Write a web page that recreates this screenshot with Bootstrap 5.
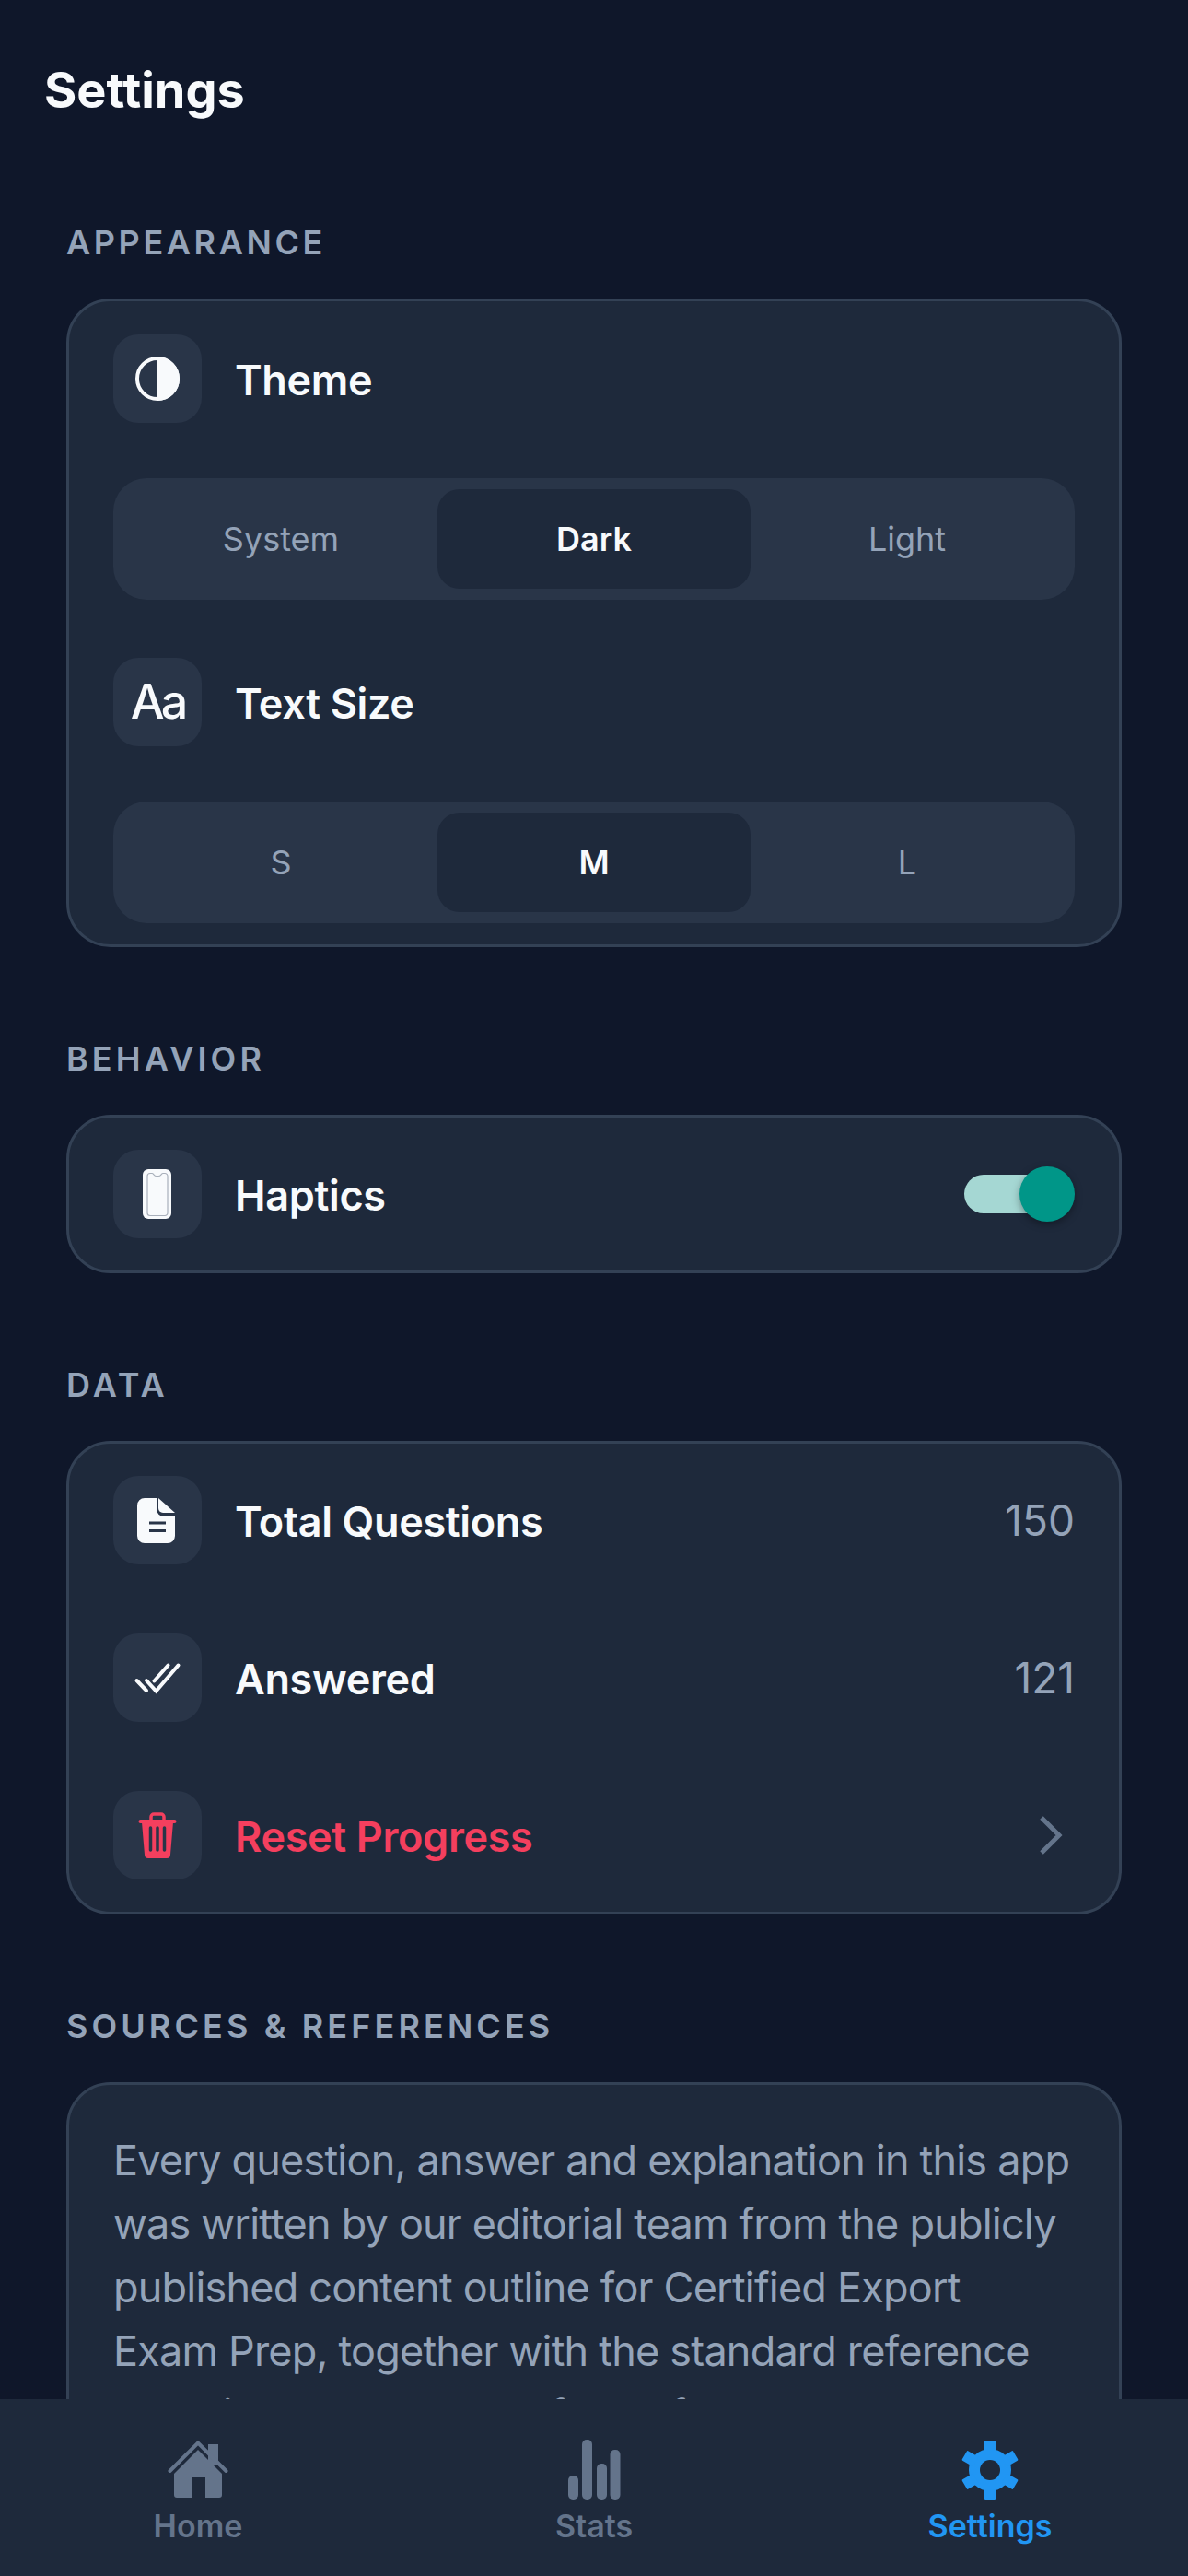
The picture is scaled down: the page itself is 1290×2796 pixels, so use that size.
<!DOCTYPE html>
<html lang="en">
<head>
  <meta charset="UTF-8">
  <title>Settings</title>
  <meta name="viewport" content="width=device-width, initial-scale=1">
  <link href="https://cdn.jsdelivr.net/npm/bootstrap@5.3.0/dist/css/bootstrap.min.css" rel="stylesheet">
  <style>
    html, body {
      height: 2796px;
      overflow: hidden;
    }
    body {
      background: #0f172a;
      font-family: Inter, "Liberation Sans", sans-serif;
      color: #f8fafc;
    }
    .app-main {
      height: 2604px;
      overflow: hidden;
      padding: 0 72px;
    }
    .page-title {
      font-size: 54px;
      font-weight: 700;
      line-height: 66px;
      margin: 65px 0 110px -24px;
    }
    .group-label {
      font-size: 36px;
      font-weight: 600;
      line-height: 44px;
      letter-spacing: 4.1px;
      color: #94a3b8;
      margin: 0 0 39px;
    }
    .label-tight { letter-spacing: 3.6px; }
    .group-box {
      background: #1e293b;
      border: 3px solid #334155;
      border-radius: 48px;
      padding: 35px 48px;
      margin-bottom: 99px;
    }
    .group-box.seg-box { padding: 36px 48px 23px; }
    .group-box.stack-box { gap: 75px; }
    .tile {
      width: 96px;
      height: 96px;
      border-radius: 27px;
      background: #293548;
      flex: none;
    }
    .row-text {
      font-size: 45px;
      font-weight: 600;
      line-height: 54px;
      letter-spacing: -0.35px;
      margin-left: 36px;
      padding-top: 3px;
    }
    .row-value {
      font-size: 46px;
      color: #94a3b8;
    }
    .danger-text { color: #f43f5e; }
    .aa-glyph {
      font-size: 52px;
      font-weight: 500;
      letter-spacing: -4px;
      line-height: 96px;
      text-align: center;
      color: #f8fafc;
    }
    .seg-bar {
      background: #293548;
      border-radius: 36px;
      padding: 12px;
      height: 132px;
      margin-top: 60px;
    }
    .seg-bar + .tile-row { margin-top: 63px; }
    .seg-item {
      flex: 1 1 0;
      border-radius: 24px;
      font-size: 36px;
      line-height: 108px;
      text-align: center;
      color: #94a3b8;
    }
    .seg-item.on {
      background: #1e293b;
      color: #f8fafc;
      font-weight: 600;
    }
    .toggle-track {
      width: 102px;
      height: 42px;
      border-radius: 21px;
      background: #a5d7d3;
      margin-right: 18px;
    }
    .toggle-knob {
      position: absolute;
      top: -9px;
      right: -18px;
      width: 60px;
      height: 60px;
      border-radius: 50%;
      background: #009688;
      box-shadow: 0 3px 9px rgba(0, 0, 0, .35);
    }
    .source-text {
      font-size: 45px;
      line-height: 69px;
      letter-spacing: -0.8px;
      color: #94a3b8;
      margin: 12px 0 0;
    }
    .tab-bar {
      height: 192px;
      background: #1e293b;
    }
    .tab-item {
      flex: 1 1 0;
      padding-top: 44px;
      font-size: 34px;
      font-weight: 600;
      line-height: 40px;
      color: #64748b;
    }
    .tab-item svg { display: block; margin-bottom: 8px; }
    .tab-item.on { color: #2196f3; }
  </style>
</head>
<body>

<div class="app-main">
  <h1 class="page-title">Settings</h1>

  <!-- Appearance -->
  <h2 class="group-label label-tight">APPEARANCE</h2>
  <div class="group-box seg-box">
    <div class="tile-row d-flex align-items-center">
      <div class="tile">
        <svg width="96" height="96" viewBox="0 0 96 96">
          <circle cx="48" cy="48" r="22" fill="none" stroke="#f8fafc" stroke-width="4"/>
          <path d="M48 24a24 24 0 0 1 0 48z" fill="#f8fafc"/>
        </svg>
      </div>
      <div class="row-text">Theme</div>
    </div>
    <div class="seg-bar d-flex">
      <div class="seg-item">System</div>
      <div class="seg-item on">Dark</div>
      <div class="seg-item">Light</div>
    </div>
    <div class="tile-row d-flex align-items-center">
      <div class="tile aa-glyph">Aa</div>
      <div class="row-text">Text Size</div>
    </div>
    <div class="seg-bar d-flex">
      <div class="seg-item">S</div>
      <div class="seg-item on">M</div>
      <div class="seg-item">L</div>
    </div>
  </div>

  <!-- Behavior -->
  <h2 class="group-label">BEHAVIOR</h2>
  <div class="group-box">
    <div class="d-flex align-items-center">
      <div class="tile">
        <svg width="96" height="96" viewBox="0 0 96 96">
          <rect x="32" y="21" width="31" height="54" rx="6" fill="#f8fafc"/>
          <path d="M40 25.500h2c2 0 2 3 5 3h2c3 0 3-3 5-3h2a3 3 0 0 1 3 3v40a3 3 0 0 1-3 3H40a3 3 0 0 1-3-3v-40a3 3 0 0 1 3-3z" fill="none" stroke="#a9b0bb" stroke-width="1.200"/>
        </svg>
      </div>
      <div class="row-text">Haptics</div>
      <div class="toggle-track position-relative ms-auto">
        <div class="toggle-knob"></div>
      </div>
    </div>
  </div>

  <!-- Data -->
  <h2 class="group-label">DATA</h2>
  <div class="group-box stack-box d-flex flex-column">
    <div class="d-flex align-items-center">
      <div class="tile">
        <svg width="96" height="96" viewBox="0 0 96 96">
          <path d="M34 24h13v12a8 8 0 0 0 8 8h12v21a8 8 0 0 1-8 8H34a8 8 0 0 1-8-8V32a8 8 0 0 1 8-8z" fill="#f8fafc"/>
          <path d="M49 24l18 16H54a5 5 0 0 1-5-5z" fill="#f8fafc"/>
          <path d="M39 51h18M39 59.500h18" stroke="#293548" stroke-width="3" fill="none"/>
        </svg>
      </div>
      <div class="row-text">Total Questions</div>
      <div class="row-value ms-auto">150</div>
    </div>
    <div class="d-flex align-items-center">
      <div class="tile">
        <svg width="96" height="96" viewBox="0 0 96 96" fill="none" stroke="#f8fafc" stroke-width="4" stroke-linecap="round">
          <path d="M25.500 51l10.500 11M36 51l10.500 11.500L70.500 34.500M44.500 51.500L59.500 34.500"/>
        </svg>
      </div>
      <div class="row-text">Answered</div>
      <div class="row-value ms-auto">121</div>
    </div>
    <div class="d-flex align-items-center">
      <div class="tile">
        <svg width="96" height="96" viewBox="0 0 96 96">
          <rect x="41" y="25" width="14" height="9" rx="3" fill="none" stroke="#f43f5e" stroke-width="3.500"/>
          <rect x="27.500" y="31" width="41" height="4" rx="2" fill="#f43f5e"/>
          <path d="M31 34h34l-3 35a4 4 0 0 1-4 4H38a4 4 0 0 1-4-4z" fill="#f43f5e"/>
          <path d="M40.500 40v24M48 40v24M55.500 40v24" stroke="#293548" stroke-width="3.500" stroke-linecap="round"/>
        </svg>
      </div>
      <div class="row-text danger-text">Reset Progress</div>
      <svg class="ms-auto" width="39" height="48" viewBox="0 0 39 48" fill="none" stroke="#64748b" stroke-width="5">
        <path d="M3 5l19 19L3 43"/>
      </svg>
    </div>
  </div>

  <!-- Sources -->
  <h2 class="group-label">SOURCES &amp; REFERENCES</h2>
  <div class="group-box">
    <p class="source-text">Every question, answer and explanation in this app was written by our editorial team from the publicly published content outline for Certified Export Exam Prep, together with the standard reference materials and customs forms for trade that are publicly available.</p>
  </div>
</div>

<!-- Tab bar -->
<nav class="tab-bar d-flex">
  <div class="tab-item d-flex flex-column align-items-center">
    <svg width="66" height="66" viewBox="0 0 66 66">
      <rect x="44" y="5" width="11" height="22" fill="#64748b"/>
      <path d="M2.500 34L33 3.500 63.500 34" fill="none" stroke="#64748b" stroke-width="4" stroke-linecap="round"/>
      <path d="M33 11l26 26v23a3 3 0 0 1-3 3H41V41H26v22H10a3 3 0 0 1-3-3V37z" fill="#64748b"/>
    </svg>
    Home
  </div>
  <div class="tab-item d-flex flex-column align-items-center">
    <svg width="66" height="66" viewBox="0 0 66 66" fill="#64748b">
      <rect x="5" y="39" width="11" height="26" rx="5"/>
      <rect x="20" y="0" width="11" height="65" rx="5"/>
      <rect x="36" y="26" width="11" height="39" rx="5"/>
      <rect x="50.500" y="11" width="11" height="54" rx="5"/>
    </svg>
    Stats
  </div>
  <div class="tab-item on d-flex flex-column align-items-center">
    <svg width="66" height="66" viewBox="-33 -33 66 66" fill="#2196f3">
      <circle r="23"/>
      <rect x="-6" y="-32" width="12" height="14" rx="1"/>
      <rect x="-6" y="-32" width="12" height="14" rx="1" transform="rotate(60)"/>
      <rect x="-6" y="-32" width="12" height="14" rx="1" transform="rotate(120)"/>
      <rect x="-6" y="-32" width="12" height="14" rx="1" transform="rotate(180)"/>
      <rect x="-6" y="-32" width="12" height="14" rx="1" transform="rotate(240)"/>
      <rect x="-6" y="-32" width="12" height="14" rx="1" transform="rotate(300)"/>
      <circle r="11" fill="#1e293b"/>
    </svg>
    Settings
  </div>
</nav>

<script src="https://cdn.jsdelivr.net/npm/bootstrap@5.3.0/dist/js/bootstrap.bundle.min.js"></script>
</body>
</html>
